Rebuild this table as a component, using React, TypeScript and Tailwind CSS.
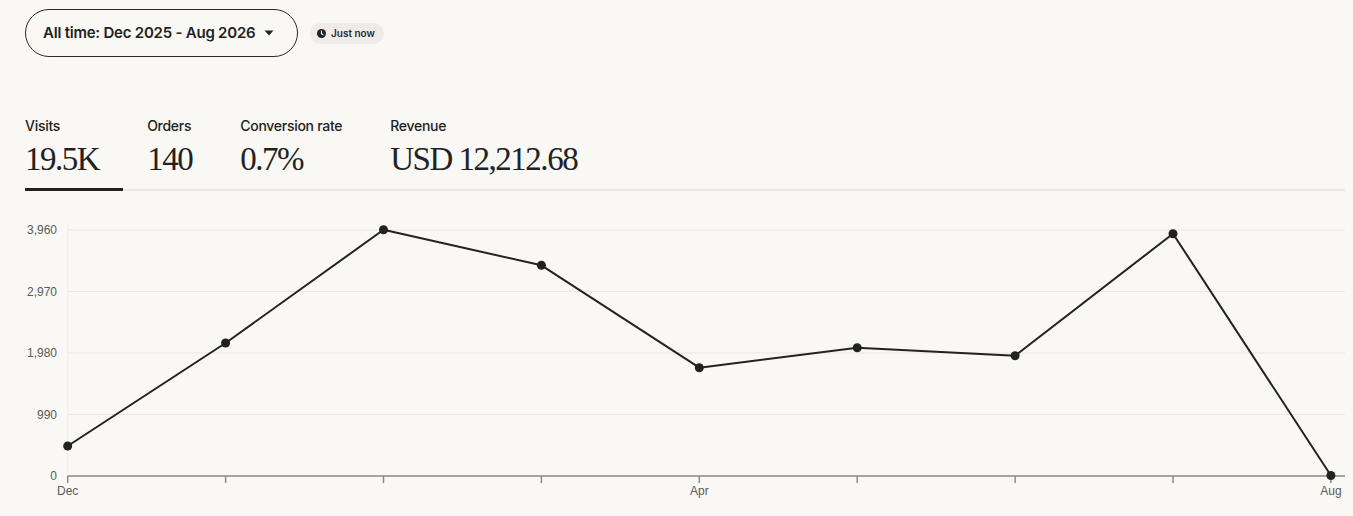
import { FC } from 'react'

const sans = { fontFamily: 'Inter, "Liberation Sans", Arial, sans-serif' }

interface IMetric {
  label: string
  value: string
}

const metrics: IMetric[] = [
  { label: 'Visits', value: '19.5K' },
  { label: 'Orders', value: '140' },
  { label: 'Conversion rate', value: '0.7%' },
  { label: 'Revenue', value: 'USD 12,212.68' }
]

// chart coords are relative to the svg, which starts at page x=25, y=191
const X0 = 42.7
const STEP = 157.9
const yTicks = [
  { label: '3,960', y: 39 },
  { label: '2,970', y: 100.5 },
  { label: '1,980', y: 162 },
  { label: '990', y: 223.5 }
]
const AXIS_Y = 285
const points = [446, 343, 229.8, 265.3, 367.7, 347.7, 355.7, 233.7, 475.5].map((y, i) => ({
  x: X0 + STEP * i,
  y: y - 191
}))

const Chart: FC = () => (
  <svg width="1320" height="325" className="block" style={{ fontFamily: '"Liberation Sans", Arial, sans-serif' }}>
    <line x1={X0} y1={32} x2={X0} y2={AXIS_Y} stroke="#efede9" strokeWidth="1" />
    {yTicks.map((t) => (
      <g key={t.label}>
        <line x1={X0} y1={t.y} x2={1320} y2={t.y} stroke="#e9e7e2" strokeWidth="1" />
        <text x={32} y={t.y + 4} textAnchor="end" fontSize="12" fill="#595959">
          {t.label}
        </text>
      </g>
    ))}
    <text x={32} y={AXIS_Y + 4} textAnchor="end" fontSize="12" fill="#595959">
      0
    </text>
    <line x1={X0} y1={AXIS_Y} x2={1320} y2={AXIS_Y} stroke="#8a8a8a" strokeWidth="1.5" />
    {points.map((p) => (
      <line key={p.x} x1={p.x} y1={AXIS_Y} x2={p.x} y2={AXIS_Y + 7} stroke="#8a8a8a" strokeWidth="1.5" />
    ))}
    <text x={X0} y={AXIS_Y + 19} textAnchor="middle" fontSize="12" fill="#595959">
      Dec
    </text>
    <text x={X0 + STEP * 4} y={AXIS_Y + 19} textAnchor="middle" fontSize="12" fill="#595959">
      Apr
    </text>
    <text x={X0 + STEP * 8} y={AXIS_Y + 19} textAnchor="middle" fontSize="12" fill="#595959">
      Aug
    </text>
    <polyline
      points={points.map((p) => `${p.x},${p.y}`).join(' ')}
      fill="none"
      stroke="#222222"
      strokeWidth="2"
      strokeLinejoin="round"
    />
    {points.map((p) => (
      <circle key={`c${p.x}`} cx={p.x} cy={p.y} r="4.5" fill="#222222" />
    ))}
  </svg>
)

const App: FC = () => {
  return (
    <div className="min-h-[516px] w-full bg-[#f9f8f5] pl-[25px] pr-[8px] pt-[9px] text-[#222222]" style={sans}>
      <div className="flex items-center gap-3">
        <button className="flex h-[48px] w-[273px] items-center gap-2 rounded-full border border-[#2a2a2a] pl-[17px] text-[15px] font-semibold tracking-[-0.015em]">
          All time: Dec 2025 - Aug 2026
          <svg width="10" height="6" viewBox="0 0 10 6" className="ml-[1px]">
            <path d="M0.5 0.5 L9.5 0.5 L5 5.5 Z" fill="#222222" />
          </svg>
        </button>
        <div className="flex h-[21px] items-center gap-[5px] rounded-full bg-[#eeebe8] pl-[7px] pr-[9px] text-[10px] font-semibold text-[#2b2a3a]">
          <svg width="9" height="9" viewBox="0 0 10 10">
            <circle cx="5" cy="5" r="5" fill="#222222" />
            <path d="M5 2.4 V5.2 L6.8 6.4" stroke="#f9f8f5" strokeWidth="1.2" fill="none" strokeLinecap="round" />
          </svg>
          Just now
        </div>
      </div>

      <div className="mt-[60px] flex gap-6 border-b-2 border-[#ebe9e5]">
        {metrics.map((m, i) => (
          <div
            key={m.label}
            className={`-mb-[2px] flex flex-col pr-6 pb-[9px] ${i === 0 ? 'border-b-[3px] border-[#222222]' : 'border-b-[3px] border-transparent'}`}
          >
            <span className="text-[14px] font-medium leading-[18px] tracking-[-0.02em]">{m.label}</span>
            <span
              className="mt-[4px] text-[33px] leading-[40px] tracking-[-0.045em]"
              style={{ fontFamily: '"Liberation Serif", "Times New Roman", serif' }}
            >
              {m.value}
            </span>
          </div>
        ))}
      </div>

      <Chart />
    </div>
  )
}

export default App
